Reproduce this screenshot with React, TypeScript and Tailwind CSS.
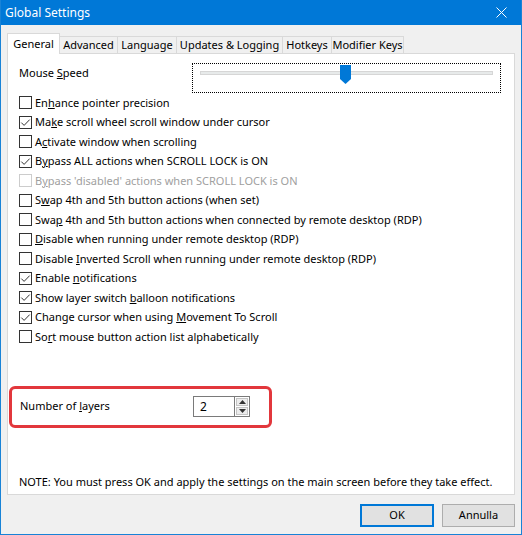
import React from "react";

type Opt = {
    parts: [string, string, string];
    checked?: boolean;
    disabled?: boolean;
};

const options: Opt[] = [
    { parts: ["En", "h", "ance pointer precision"] },
    { parts: ["Ma", "k", "e scroll wheel scroll window under cursor"], checked: true },
    { parts: ["A", "c", "tivate window when scrolling"] },
    { parts: ["B", "y", "pass ALL actions when SCROLL LOCK is ON"], checked: true },
    { parts: ["B", "y", "pass 'disabled' actions when SCROLL LOCK is ON"], disabled: true },
    { parts: ["S", "w", "ap 4th and 5th button actions (when set)"] },
    { parts: ["Swa", "p", " 4th and 5th button actions when connected by remote desktop (RDP)"] },
    { parts: ["", "D", "isable when running under remote desktop (RDP)"] },
    { parts: ["Disable ", "I", "nverted Scroll when running under remote desktop (RDP)"] },
    { parts: ["Enable ", "n", "otifications"], checked: true },
    { parts: ["Show layer switch ", "b", "alloon notifications"], checked: true },
    { parts: ["Change cursor when using ", "M", "ovement To Scroll"], checked: true },
    { parts: ["So", "r", "t mouse button action list alphabetically"] },
];

const tabs = [
    { label: "General", w: "w-[53px]", active: true },
    { label: "Advanced", w: "w-[58px]" },
    { label: "Language", w: "w-[59px]" },
    { label: "Updates & Logging", w: "w-[106px]" },
    { label: "Hotkeys", w: "w-[49px]" },
    { label: "Modifier Keys", w: "w-[72px]" },
];

const CheckBox = ({ checked, disabled }: { checked?: boolean; disabled?: boolean }) => (
    <span
        className={`flex h-[13px] w-[13px] shrink-0 items-center justify-center border bg-white ${
            disabled ? "border-[#cccccc]" : "border-[#333333]"
        }`}
    >
        {checked && (
            <svg width="11" height="11" viewBox="0 0 11 11">
                <path d="M1.3 5.6 L4.1 8.4 L9.7 2.6" stroke="#333333" strokeWidth="1" fill="none" />
            </svg>
        )}
    </span>
);

const Arrow = ({ up }: { up?: boolean }) => (
    <svg width="7" height="4" viewBox="0 0 7 4">
        <path d={up ? "M0 4 L3.5 0 L7 4 Z" : "M0 0 L3.5 4 L7 0 Z"} fill="#333333" />
    </svg>
);

export default function App() {
    return (
        <div
            className="flex h-[535px] w-[522px] flex-col whitespace-nowrap border-x border-b border-[#1883d7] bg-[#f0f0f0] text-[11px] text-black"
            style={{ fontFamily: '"Noto Sans", "Open Sans", sans-serif' }}
        >
            {/* title bar */}
            <div className="flex h-[25px] shrink-0 items-center bg-[#0078d7] pl-[4px] pr-[14px] text-white">
                <span className="text-[12px]">Global Settings</span>
                <svg className="ml-auto" width="11" height="11" viewBox="0 0 11 11">
                    <path d="M0.5 0.5 L10.5 10.5 M10.5 0.5 L0.5 10.5" stroke="#ffffff" strokeWidth="1" />
                </svg>
            </div>

            {/* tabs */}
            <div className="flex h-[28px] items-end pl-[6px] pt-[8px]">
                {tabs.map((t) =>
                    t.active ? (
                        <div
                            key={t.label}
                            className={`${t.w} relative z-10 -mb-px flex h-[21px] items-center justify-center border border-b-0 border-[#d9d9d9] bg-white`}
                        >
                            {t.label}
                        </div>
                    ) : (
                        <div
                            key={t.label}
                            className={`${t.w} flex h-[17px] items-center justify-center border border-l-0 border-b-0 border-[#d9d9d9] bg-[#f0f0f0]`}
                        >
                            {t.label}
                        </div>
                    )
                )}
            </div>

            {/* panel */}
            <div className="mx-[6px] flex h-[442px] flex-col border border-[#d9d9d9] bg-white">
                <div className="mt-[9px] flex h-[30px] items-center pl-[11px] pr-[13px]">
                    <span className="-mt-[10px]">
                        Mouse <span className="underline">S</span>peed
                    </span>
                    <div className="relative ml-auto h-[30px] w-[309px] border border-dotted border-black">
                        <div className="mx-[7px] mt-[7px] h-[4px] border border-[#d6d6d6] bg-[#e7eaea]" />
                        <svg className="absolute left-[147px] top-[1px]" width="11" height="19" viewBox="0 0 11 19">
                            <path d="M0 0 H11 V14 L5.5 19 L0 14 Z" fill="#0078d7" />
                        </svg>
                    </div>
                </div>

                <div className="flex flex-col pl-[11px]">
                    {options.map((o, i) => (
                        <div key={i} className="flex h-[19.5px] items-center gap-[3px]">
                            <CheckBox checked={o.checked} disabled={o.disabled} />
                            <span className={o.disabled ? "text-[#a0a0a0]" : ""}>
                                {o.parts[0]}
                                <span className="underline">{o.parts[1]}</span>
                                {o.parts[2]}
                            </span>
                        </div>
                    ))}
                </div>

                <div className="ml-px mt-[39px] flex h-[42px] w-[263px] items-center rounded-[6px] border-[3px] border-[#e2373c] pl-[8px]">
                    <span>
                        Number of <span className="underline">l</span>ayers
                    </span>
                    <div className="ml-auto mr-[19px] flex h-[21px]">
                        <div className="flex w-[42px] items-center border border-[#7a7a7a] pl-[6px] text-[12px]">2</div>
                        <div className="flex w-[15px] flex-col gap-px border border-l-0 border-[#7a7a7a] bg-white p-px">
                            <div className="flex flex-1 items-center justify-center border border-[#c4c4c4] bg-[#ececec]">
                                <Arrow up />
                            </div>
                            <div className="flex flex-1 items-center justify-center border border-[#c4c4c4] bg-[#ececec]">
                                <Arrow />
                            </div>
                        </div>
                    </div>
                </div>

                <div className="mt-auto pb-[4px] pl-[11px]">
                    NOTE: You must press OK and apply the settings on the main screen before they take effect.
                </div>
            </div>

            {/* buttons */}
            <div className="mt-[9px] flex justify-end gap-[8px] pr-[6px]">
                <button
                    type="button"
                    className="flex h-[23px] w-[74px] items-center justify-center border-2 border-[#0078d7] bg-[#e1e1e1]"
                >
                    OK
                </button>
                <button
                    type="button"
                    className="flex h-[23px] w-[73px] items-center justify-center border border-[#adadad] bg-[#e1e1e1]"
                >
                    Annulla
                </button>
            </div>
        </div>
    );
}
